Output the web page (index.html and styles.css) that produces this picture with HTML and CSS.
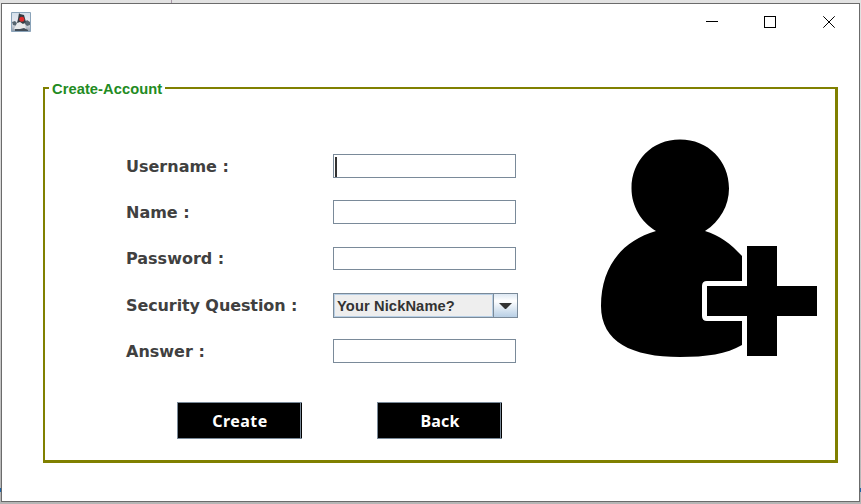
FILE: index.html
```html
<!DOCTYPE html>
<html lang="en">
<head>
<meta charset="utf-8">
<title>Create-Account</title>
<link rel="stylesheet" href="styles.css">
</head>
<body>
<main class="window">
  <header class="titlebar">
    <svg class="app-icon" width="20" height="20" viewBox="0 0 20 20">
      <defs><linearGradient id="tile" x2="0" y2="1"><stop stop-color="#d4dfea"/><stop offset=".55" stop-color="#e9eaf1"/><stop offset="1" stop-color="#8c99a8"/></linearGradient></defs>
      <path fill="url(#tile)" stroke="#8aa3b9" d="M.5.5h19v19H.5z"/>
      <path fill="#566570" d="M1 10l3-1 3 3 6-1 3-3 3 2v3l-3 1-2-2-8 2-4-1z"/>
      <path fill="#e9eaec" d="M6 11l7-2 2 8-4 1-8-1z"/>
      <path fill="#343c43" d="M8 1l1 1 4 1 2 7-3 2-3-2-3 1 1-4z"/>
      <circle cx="10.8" cy="7.2" r="2.5" fill="#e02a2b"/>
      <path fill="#434e59" d="M4 17l5 0 4-1 4 2v1H4z"/>
    </svg>
    <svg class="controls" width="130" height="12" viewBox="0 0 130 12" fill="none" stroke="#000" shape-rendering="crispEdges">
      <path d="M0 5.5h12"/>
      <path d="M58.5.5h11v11h-11z"/>
      <path shape-rendering="auto" d="M117.3.3l11.4 11.4M128.7.3l-11.4 11.4"/>
    </svg>
  </header>
  <section class="panel">
    <h1 class="panel-title">Create-Account</h1>
    <form class="form">
      <div class="fields">
        <label class="label">Username :</label><div class="input"><span class="caret"></span></div>
        <label class="label">Name :</label><div class="input"></div>
        <label class="label label-password">Password :</label><div class="input input-password"></div>
        <label class="label label-question">Security Question :</label>
        <div class="combo">
          <span class="combo-value">Your NickName?</span>
          <span class="combo-arrow"><svg width="13" height="6" viewBox="0 0 13 6"><path fill="#333" d="M0 0h13L6.5 6.5z"/></svg></span>
        </div>
        <label class="label">Answer :</label><div class="input"></div>
      </div>
      <div class="actions">
        <button class="button" type="button"><span class="create">Create</span></button>
        <button class="button" type="button"><span class="back">Back</span></button>
      </div>
    </form>
    <svg class="portrait" width="240" height="240" viewBox="0 0 240 240">
      <path d="M90 9.5c28 0 49 21 49 49 0 17-9 33-24 42.500 14 4 26 13 37 25V151h-35q-5 0-5 5v30q0 5 5 5h35v24c-15 9-36 12-62 12-48 0-79-15-79-51C11 138 31 111 66 101 51 92 41.500 76 41.500 58.500c0-28 20.500-49 48.500-49z"/>
      <path d="M157 116h30v40h40v30h-40v40h-30v-40h-40v-30h40z"/>
    </svg>
  </section>
</main>
</body>
</html>
```
FILE: styles.css
```css
* { box-sizing: border-box; }

body {
  margin: 0;
  height: 504px;
  padding: 3px 1px 2px;
  overflow: hidden;
  background:
    linear-gradient(#2065a5, #2065a5) 0 488px / 100% 4px no-repeat,
    linear-gradient(#a897a8, #a897a8) 171px 0 / 1px 4px no-repeat,
    linear-gradient(#e2e2e2, #d3d3d3 50%, #b5b5b5);
}

.window {
  height: 499px;
  border: 1px solid #6b6b6b;
  background: #fff;
}

.titlebar {
  display: flex;
  justify-content: space-between;
  align-items: flex-start;
  height: 83px;
  padding: 8px 23px 0 9px;
}

.controls { margin-top: 4px; }

.panel {
  display: flex;
  width: 795px;
  height: 376px;
  margin-left: 41px;
  border: solid #808000;
  border-width: 2px 3px 3px 2px;
  position: relative;
}

.panel-title {
  position: absolute;
  left: 4px;
  top: -10px;
  width: 116px;
  margin: 0;
  padding-left: 3px;
  background: #fff;
  color: #228b22;
  font: bold 14.67px/20px "Liberation Sans", Arial, sans-serif;
  letter-spacing: 0.08px;
  white-space: nowrap;
}

.form {
  width: 545px;
  padding: 65px 0 0 81px;
}

.fields {
  display: grid;
  grid-template-columns: 207px 185px;
  grid-template-rows: 46px 47px 46px 46px 24px;
  align-items: start;
}

.label {
  color: #404040;
  font: bold 16px/26px "DejaVu Sans", Verdana, sans-serif;
  height: 24px;
  white-space: nowrap;
}

.label-password { line-height: 24px; }

.label-question { letter-spacing: -0.1px; }

.input {
  width: 183px;
  height: 24px;
  padding: 2px 1px;
  border: 1px solid #7a8a99;
}

.input-password { height: 23px; }

.caret {
  display: block;
  width: 2px;
  height: 20px;
  background: #333;
}

.combo {
  display: flex;
  width: 185px;
  height: 25px;
  border: 1px solid #7a8a99;
}

.combo-value {
  width: 159px;
  padding-left: 2px;
  border: 1px solid #b8cfe5;
  background: #eee;
  color: #333;
  font: bold 14.67px/22px "Liberation Sans", Arial, sans-serif;
  letter-spacing: 0.12px;
}

.combo-arrow {
  display: flex;
  flex: 1;
  align-items: center;
  justify-content: center;
  border-left: 1px solid #7a8a99;
  background: linear-gradient(#dde8f3, #fff 30%, #b8cfe5);
}

.actions {
  display: flex;
  gap: 75px;
  margin: 39px 0 0 51px;
}

.button {
  width: 125px;
  height: 37px;
  padding: 1px 0 0;
  border: 1px solid #7a8a99;
  border-right: 0;
  background: linear-gradient(#7a8a99, #7a8a99) 122px 0 / 1px 100% no-repeat #000;
  color: #fff;
  font: bold 16px/35px "Noto Sans", sans-serif;
}

.create { letter-spacing: 0.45px; }

.back { letter-spacing: 0.2px; }

.portrait { margin-top: 41px; }
```
